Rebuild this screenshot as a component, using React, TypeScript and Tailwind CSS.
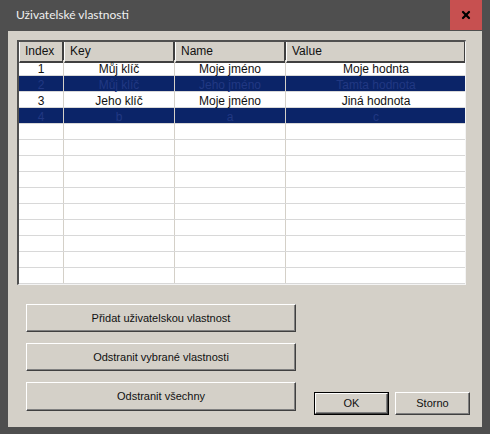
import { X } from "lucide-react";

interface Row {
  index: string;
  key: string;
  name: string;
  value: string;
  selected?: boolean;
}

const rows: Row[] = [
  { index: "1", key: "Můj klíč", name: "Moje jméno", value: "Moje hodnta" },
  { index: "2", key: "Můj klíč", name: "Jeho jméno", value: "Tamta hodnota", selected: true },
  { index: "3", key: "Jeho klíč", name: "Moje jméno", value: "Jiná hodnota" },
  { index: "4", key: "b", name: "a", value: "c", selected: true },
];

const EMPTY_ROWS = 10;
const headers = ["Index", "Key", "Name", "Value"];

const btn =
  "flex items-center justify-center bg-[#d4d0c8] border-t border-l border-white border-b border-r border-b-[#404040] border-r-[#404040] shadow-[inset_-1px_-1px_0_#808080] text-[11px] text-[#111]";

const App = () => {
  return (
    <div
      className="w-[490px] h-[434px] bg-[#4f4f4f] flex flex-col"
      style={{ fontFamily: '"Liberation Sans", Arial, sans-serif' }}
    >
      {/* title bar */}
      <div className="h-[31px] flex items-stretch pl-[16px] pr-[8px]">
        <div
          className="flex-1 flex items-center pb-[1px] text-[12px] text-[#f0f0f0]"
          style={{ fontFamily: 'Lato, "Noto Sans", sans-serif' }}
        >
          Uživatelské vlastnosti
        </div>
        <div className="w-[32px] h-[30px] bg-[#c75050] flex items-center justify-center">
          <X size={12} strokeWidth={4.5} className="text-black" />
        </div>
      </div>

      {/* client area */}
      <div className="mx-[8px] h-[396px] bg-[#d4d0c8] pt-[9px] pl-[9px]">
        {/* list view */}
        <div className="w-[449px] h-[245px] bg-white border-t-2 border-l-2 border-t-[#505050] border-l-[#505050] border-r border-b border-r-[#f4f4f4] border-b-[#f4f4f4] overflow-hidden">
          <div className="grid grid-cols-[45px_111px_111px_180px] h-[18px] text-[12px]">
            {headers.map((h) => (
              <div
                key={h}
                className="bg-[#d4d0c8] border-l border-l-white border-r-2 border-r-[#404040] border-b-2 border-b-[#404040] pl-[5px] leading-[19px] text-[#111]"
              >
                {h}
              </div>
            ))}
          </div>
          {rows.map((r) => (
            <div
              key={r.index}
              className={`grid grid-cols-[45px_111px_111px_180px] h-[16px] text-[12px] leading-[18px] text-center border-b border-b-[#d8d8d8] ${
                r.selected ? "bg-[#0b2468] text-[#213883]" : "bg-white text-[#111]"
              }`}
            >
              <div className="border-r border-r-[#d4d0c8]">{r.index}</div>
              <div className="border-r border-r-[#d4d0c8]">{r.key}</div>
              <div className="border-r border-r-[#d4d0c8]">{r.name}</div>
              <div>{r.value}</div>
            </div>
          ))}
          {Array.from({ length: EMPTY_ROWS }).map((_, i) => (
            <div
              key={i}
              className="grid grid-cols-[45px_111px_111px_180px] h-[16px] border-b border-b-[#d8d8d8]"
            >
              <div className="border-r border-r-[#d4d0c8]" />
              <div className="border-r border-r-[#d4d0c8]" />
              <div className="border-r border-r-[#d4d0c8]" />
              <div />
            </div>
          ))}
        </div>

        {/* buttons */}
        <div className="flex items-start pt-[19px] pl-[9px]">
          <div className="w-[270px] flex flex-col gap-[11px]">
            <button className={`${btn} h-[28px]`}>Přidat uživatelskou vlastnost</button>
            <button className={`${btn} h-[28px]`}>Odstranit vybrané vlastnosti</button>
            <button className={`${btn} h-[29px]`}>Odstranit všechny</button>
          </div>
          <div className="flex gap-[6px] mt-[88px] ml-[18px]">
            <div className="border border-black">
              <button className={`${btn} w-[73px] h-[21px]`}>OK</button>
            </div>
            <button className={`${btn} w-[75px] h-[23px]`}>Storno</button>
          </div>
        </div>
      </div>
    </div>
  );
};

export default App;
